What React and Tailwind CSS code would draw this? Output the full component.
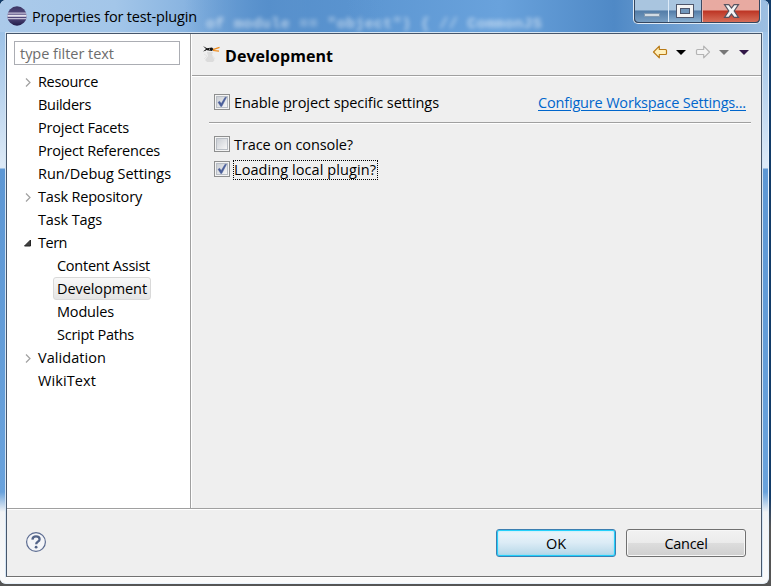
import { useLayoutEffect, useRef, useState } from "react";

// Single-line label whose tracking is adjusted so that it occupies the given width.
function Label({ text, width, className = "", children }) {
  const ref = useRef(null);
  const [spacing, setSpacing] = useState(0);
  useLayoutEffect(() => {
    const natural = ref.current.getBoundingClientRect().width;
    setSpacing((width - natural) / text.length);
  }, [text, width]);
  return (
    <span
      ref={ref}
      className={`inline-block shrink-0 whitespace-pre ${className}`}
      style={{ letterSpacing: `${spacing}px` }}
    >
      {children || text}
    </span>
  );
}

const TREE = [
  { text: "Resource", width: 60, arrow: "closed" },
  { text: "Builders", width: 53 },
  { text: "Project Facets", width: 91 },
  { text: "Project References", width: 122 },
  { text: "Run/Debug Settings", width: 133 },
  { text: "Task Repository", width: 104, arrow: "closed" },
  { text: "Task Tags", width: 64 },
  { text: "Tern", width: 29, arrow: "open" },
  { text: "Content Assist", width: 93, child: true },
  { text: "Development", width: 90, child: true, selected: true },
  { text: "Modules", width: 57, child: true },
  { text: "Script Paths", width: 77, child: true },
  { text: "Validation", width: 68, arrow: "closed" },
  { text: "WikiText", width: 58 },
];

function Twistie({ state }) {
  return (
    <svg width="10" height="12" viewBox="0 0 10 12" className="shrink-0">
      {state === "closed" && (
        <path d="M3 2.5 7 6.5 3 10.5" fill="none" stroke="#a0a0a0" strokeWidth="1.2" />
      )}
      {state === "open" && <path d="M7.5 3v6h-6z" fill="#404040" stroke="#262626" strokeWidth="1" />}
    </svg>
  );
}

function TreeRow({ text, width, arrow, child, selected }) {
  return (
    <li className={`flex h-[23px] items-center ${child ? "pl-[46px]" : "pl-4"}`}>
      {!child && <Twistie state={arrow} />}
      <span
        className={
          selected
            ? "flex h-[23px] items-center rounded-[3px] border border-[#d9d9d9] bg-linear-to-b from-[#f8f8f8] to-[#e5e5e5] px-[3px]"
            : child
              ? "flex pl-1"
              : "flex pl-[5px]"
        }
      >
        <Label text={text} width={width} />
      </span>
    </li>
  );
}

function Check({ checked }) {
  return (
    <span className="mb-[2px] flex size-4 shrink-0 items-center justify-center border border-[#8e8f8f] bg-[#f4f4f4]">
      <span className="flex size-3 items-center justify-center border border-[#b9bec5] bg-linear-to-br from-[#cbcfd5] to-[#f6f6f6]">
        {checked && (
          <svg width="12" height="12" viewBox="0 0 12 12" className="shrink-0">
            <path d="M2 6.3 3.7 5.2 5.2 7.5 9 1.3h1.6L5.8 10.5H4.7z" fill="#4b5f9b" stroke="#4b5f9b" strokeWidth=".4" />
          </svg>
        )}
      </span>
    </span>
  );
}

function Arrow({ forward }) {
  return (
    <svg width="16" height="14" viewBox="0 0 16 14" className={forward ? "-scale-x-100" : ""}>
      <path
        d="M1.5 7 7.3 1.2V4.5h6.2q1 0 1 1v3q0 1-1 1H7.3v3.3z"
        fill={forward ? "#f4f4f4" : "#fff0bd"}
        stroke={forward ? "#b4b4b4" : "#b97a16"}
        strokeWidth="1.2"
        strokeLinejoin="round"
      />
    </svg>
  );
}

function Caret({ color }) {
  return (
    <svg width="10" height="5" viewBox="0 0 10 5">
      <path d="M0 0h10L5 5z" fill={color} />
    </svg>
  );
}

function EclipseIcon() {
  return (
    <svg width="20" height="20" viewBox="0 0 20 20" className="shrink-0">
      <defs>
        <linearGradient id="orb" x1="0" y1="0" x2="0" y2="1">
          <stop offset="0" stopColor="#3b3463" />
          <stop offset=".5" stopColor="#5b5287" />
          <stop offset="1" stopColor="#211b48" />
        </linearGradient>
      </defs>
      <circle cx="10" cy="10" r="9.7" fill="url(#orb)" />
      <path d="M1 7.2h18M.6 12.6h18.8" stroke="#c3bed6" strokeWidth="1.2" />
      <path d="M.4 9.8h19.2" stroke="#e6e3ef" strokeWidth="2" />
    </svg>
  );
}

function TernIcon() {
  return (
    <svg width="17" height="17" viewBox="0 0 17 17" className="shrink-0">
      <path d="M4 6h6l-1 3 2.5 5-1.5 2H4l-2-2 3-4z" fill="#dcdcdc" />
      <path d="m1 8 3 2-3 3M9 9l3 4" fill="none" stroke="#e4e4e4" />
      <path d="M0 0 4 2.3 9 1.5 10.5 3 9 5 4 4.3 0 5.5 3 3z" fill="#151515" />
      <path d="m10 3.6 6.5-2.2M10 4.5l6 .6" stroke="#f08a18" strokeWidth="1.2" />
      <path d="M6 3.2h1M3 4.7h1" stroke="#fff" strokeWidth=".8" />
    </svg>
  );
}

function WindowControls() {
  return (
    <div className="flex h-[24px] w-[128px] shrink-0 overflow-hidden rounded-b-[5px] border border-t-0 border-[#e0ebf6] bg-[#34465f] px-px pb-px">
      <div className="flex w-[34px] items-end justify-center rounded-bl-[4px] border-r border-[#ddebf8] bg-linear-to-b from-[#a9c5df] from-45% via-[#537da8] via-50% to-[#799fc3] pb-[5px]">
        <span className="h-[4px] w-4 border border-[#8199b1] bg-[#d2dbe3]" />
      </div>
      <div className="flex w-[33px] items-center justify-center border-r border-[#3e4961] bg-linear-to-b from-[#a9c5df] from-45% via-[#537da8] via-50% to-[#8bb1d2]">
        <span className="flex h-[14px] w-[18px] items-center justify-center border border-[#4e566b] bg-[#f4f4f4]">
          <span className="h-[6px] w-[10px] border border-[#4e566b] bg-[#7197bc]" />
        </span>
      </div>
      <div className="flex flex-1 items-center justify-center rounded-br-[4px] border-l border-[#e9b7b0] bg-linear-to-b from-[#e8aaa1] from-45% via-[#bd3424] via-50% to-[#d66d58]">
        <svg width="17" height="16" viewBox="0 0 17 16">
          <path
            d="M1.5 1.7h4.4L8.5 5l2.6-3.3h4.4L11.2 8l4.3 6.3h-4.4L8.5 11l-2.6 3.3H1.5L5.8 8z"
            fill="#f5f5f5"
            stroke="#56535f"
            strokeWidth="1.2"
          />
        </svg>
      </div>
    </div>
  );
}

function TitleBar() {
  return (
    <header className="relative flex h-[32px] shrink-0 justify-between overflow-hidden bg-linear-to-r from-[#abcaea] from-0% via-[#a3c6e9] via-15% to-[#5b95d1] to-40%">
      <div className="absolute inset-0 bg-linear-to-r from-transparent from-24% via-[#568fcb] via-35% to-transparent to-50%" />
      <div className="absolute inset-0 bg-linear-to-r from-[#659fda]/0 from-45% via-[#69a2dc] via-65% to-[#4f89c6] to-80%" />
      <div className="absolute inset-0 bg-linear-to-r from-transparent from-80% to-[#9dbfe2]" />
      <div className="relative flex items-center gap-[5px] pl-[7px]">
        <EclipseIcon />
        <Label text="Properties for test-plugin" width={165} className="pt-[2px] leading-[20px]" />
        <Label
          text={'of module == "object") { // CommonJS'}
          width={336}
          className="mt-[17px] ml-[4px] font-['Liberation_Mono',monospace] text-[15px] leading-[13px] font-bold text-white/55 blur-[2px]"
        />
      </div>
      <div className="relative flex pr-[7px]">
        <WindowControls />
      </div>
    </header>
  );
}

export default function App() {
  return (
    <div className="h-[586px] w-[771px] overflow-hidden bg-linear-to-b from-[#123b68] from-85% to-[#555] to-90% pr-[2px] pb-[2px] font-['Open_Sans','Noto_Sans',sans-serif] text-[14.5px] leading-[22px] text-black">
      <div className="flex h-[584px] w-[769px] flex-col overflow-hidden rounded-[6px] border-r border-b border-[#e8f2fc] bg-[#f4f5f6]">
        <TitleBar />
        <div className="flex min-h-0 flex-1 bg-linear-to-b from-[#9dc2e7] from-0% via-[#dce9f6] via-24% to-[#dce9f6] to-24%">
          <div className="flex flex-1 bg-[linear-gradient(to_bottom,transparent_136px,#5d97d4_137px,#69a2dc_460px,#f1f3f5_480px,#fafafa_100%)] pr-[5px] pb-[5px] pl-[5px]">
            <div className="flex flex-1 border border-[#d5e5f4] border-b-white">
              <div className="flex flex-1 flex-col border border-[#46566b] border-b-[#717171] bg-[#efefef]">
                <main className="flex h-[474px] shrink-0">
                  <aside className="w-[184px] shrink-0 border-r border-[#a0a0a0] bg-white">
                    <div className="mt-[7px] ml-[7px] flex h-6 w-[166px] items-center border border-[#abadb3] pt-[2px] pl-[5px] text-[#6d6d6d]">
                      <Label text="type filter text" width={94} />
                    </div>
                    <ul className="mt-[5px]">
                      {TREE.map((item) => (
                        <TreeRow key={item.text} {...item} />
                      ))}
                    </ul>
                  </aside>
                  <section className="flex-1 border-l border-white">
                    <div className="flex h-[42px] items-center justify-between border-b border-[#a0a0a0] pr-3 pl-[11px]">
                      <div className="flex items-center gap-[5px]">
                        <TernIcon />
                        <Label text="Development" width={108} className="pt-[3px] text-[16px] font-bold" />
                      </div>
                      <div className="flex items-center pb-[5px]">
                        <Arrow />
                        <span className="flex pl-2"><Caret color="#000" /></span>
                        <span className="flex pl-[9px]"><Arrow forward /></span>
                        <span className="flex pl-2"><Caret color="#777" /></span>
                        <span className="flex pl-[10px]"><Caret color="#321747" /></span>
                      </div>
                    </div>
                    <div className="border-t border-white pr-[10px] pl-[17px]">
                      <div className="flex h-[46px] items-center justify-between border-b border-[#a0a0a0] pt-[6px] pr-[5px] pl-[5px]">
                        <div className="flex items-center gap-1">
                          <Check checked />
                          <Label text="Enable project specific settings" width={205}>
                            Enable <span className="underline underline-offset-2">p</span>roject specific settings
                          </Label>
                        </div>
                        <Label
                          text="Configure Workspace Settings..."
                          width={208}
                          className="text-[#0066cc] underline underline-offset-2"
                        />
                      </div>
                      <div className="border-t border-white pt-2 pl-[5px]">
                        <div className="flex h-[25px] items-center gap-1">
                          <Check />
                          <Label text="Trace on console?" width={119} />
                        </div>
                        <div className="flex h-[25px] items-center gap-[3px]">
                          <Check checked />
                          <span className="flex h-5 items-center border border-dotted border-black pr-px">
                            <Label text="Loading local plugin?" width={142} />
                          </span>
                        </div>
                      </div>
                    </div>
                  </section>
                </main>
                <footer className="flex flex-1 items-center justify-between border-t border-[#a0a0a0] pr-[15px] pl-[18px] shadow-[inset_0_1px_0_white]">
                  <svg width="22" height="22" viewBox="0 0 22 22" className="mb-[2px]">
                    <circle cx="11" cy="11" r="9.4" fill="#f4f5f8" stroke="#5c6c91" strokeWidth="1.2" />
                    <path
                      d="M7.4 8.6Q7.8 5.4 11 5.4q3.6 0 3.6 2.9 0 1.5-1.8 2.5-1.6.9-1.6 2.5"
                      fill="none"
                      stroke="#536488"
                      strokeWidth="2.3"
                    />
                    <circle cx="11.1" cy="16.2" r="1.4" fill="#536488" />
                  </svg>
                  <div className="flex gap-[10px]">
                    <button className="flex h-7 w-[120px] items-center justify-center rounded-[3px] border border-[#3c7fb1] bg-linear-to-b from-[#edf5fa] from-0% via-[#dcecf6] via-48% to-[#b4d6e7] pt-[2px] shadow-[inset_0_0_0_1px_#24d0fb,inset_0_0_3px_#48d9ff]">
                      <Label text="OK" width={20} />
                    </button>
                    <button className="flex h-7 w-[120px] items-center justify-center rounded-[3px] border border-[#707070] bg-[linear-gradient(to_bottom,#f2f2f2,#ebebeb_48%,#dddddd_50%,#cfcfcf)] pt-[2px] shadow-[inset_0_0_0_1px_#f7f7f7]">
                      <Label text="Cancel" width={43} />
                    </button>
                  </div>
                </footer>
              </div>
            </div>
          </div>
        </div>
      </div>
    </div>
  );
}
